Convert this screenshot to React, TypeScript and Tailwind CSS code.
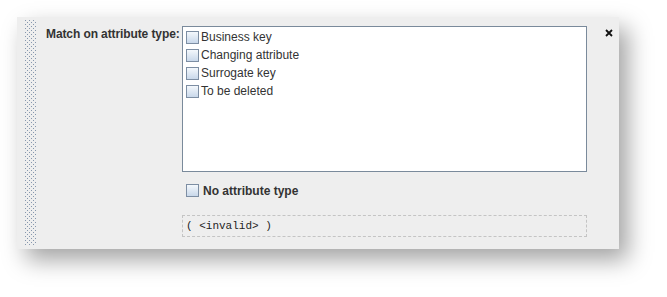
import React from "react";

function Check() {
  return (
    <span className="inline-block w-[13px] h-[13px] shrink-0 border border-[#7d8ea3] bg-gradient-to-b from-[#f4f8fc] to-[#c9d8ea]" />
  );
}

const items = ["Business key", "Changing attribute", "Surrogate key", "To be deleted"];

export default function App() {
  return (
    <div className="w-[667px] h-[297px] bg-white overflow-hidden pt-[17px] pl-[17px] font-['Liberation_Sans',Arial,sans-serif]">
      <div className="w-[602px] h-[232px] bg-[#eeeeee] shadow-[9px_11px_22px_rgba(0,0,0,0.36)] flex">
        <div className="mt-[3px] ml-[7px] w-[12px] h-[226px] bg-[conic-gradient(from_270deg_at_1px_1px,#8797ad_90deg,transparent_0),conic-gradient(from_270deg_at_1px_1px,#8797ad_90deg,transparent_0)] bg-[length:4px_4px] bg-[position:1px_0,3px_2px]" />
        <div className="ml-[10px] pt-[9px] flex">
          <div className="w-[136px] text-[12px] font-bold text-[#333333] pt-[1px] leading-[15px] tracking-[-0.1px]">
            Match on attribute type:
          </div>
          <div className="w-[405px] flex flex-col">
            <div className="h-[146px] border border-[#7a8a9b] bg-white pt-[1px] pl-[3px]">
              {items.map((t) => (
                <div key={t} className="h-[18px] flex items-center gap-[2px]">
                  <Check />
                  <span className="text-[12px] text-[#333333] leading-[18px]">{t}</span>
                </div>
              ))}
            </div>
            <div className="mt-[11px] pl-[4px] h-[15px] flex items-center gap-[4px]">
              <Check />
              <span className="text-[12px] font-bold text-[#333333]">No attribute type</span>
            </div>
            <div className="mt-[17px] h-[22px] border border-dashed border-[#c4c4c4] flex items-center pl-[3px] font-['Liberation_Mono',monospace] text-[11px] text-[#1e1e1e] whitespace-pre">
              {"( <invalid> )"}
            </div>
          </div>
          <div className="ml-[18px] pt-[3px]">
            <svg width="8" height="8" viewBox="0 0 8 8">
              <path d="M1 1L7 7M7 1L1 7" stroke="#111" strokeWidth="1.8" />
            </svg>
          </div>
        </div>
      </div>
    </div>
  );
}
